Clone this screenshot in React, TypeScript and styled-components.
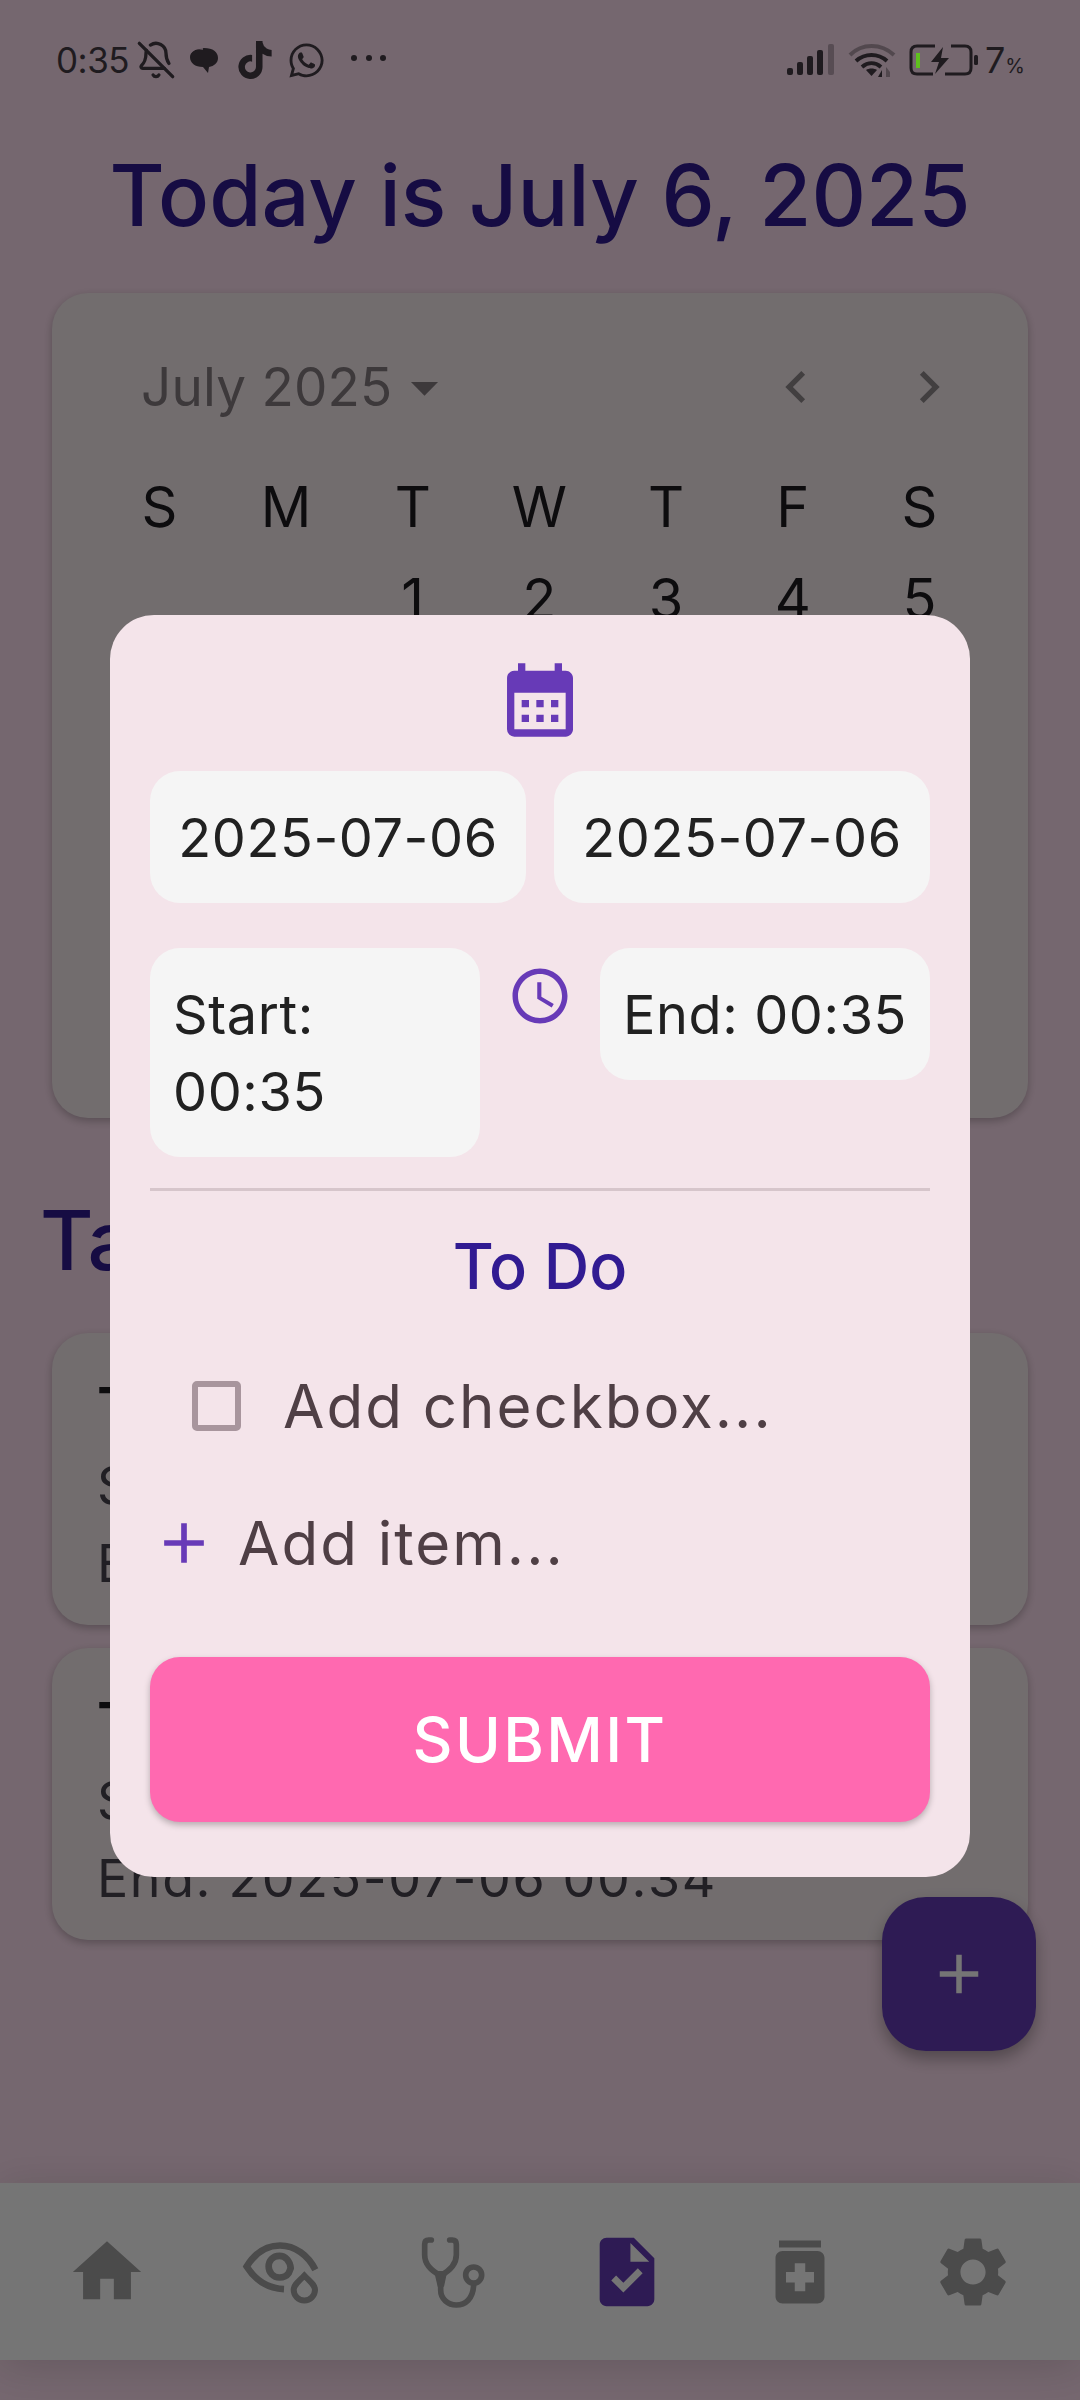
import React from 'react';
import styled, { createGlobalStyle } from 'styled-components';
import { BellOff } from 'lucide-react';
import { FaTiktok, FaWhatsapp } from 'react-icons/fa';
import {
  MdAccessTime,
  MdAdd,
  MdArrowDropDown,
  MdCalendarMonth,
  MdChevronLeft,
  MdChevronRight,
  MdHome,
  MdMedication,
  MdSettings,
  MdTask,
} from 'react-icons/md';

const WEEK_DAYS = ['S', 'M', 'T', 'W', 'T', 'F', 'S'];
const DAYS = ['', '', ...Array.from({ length: 31 }, (_, i) => String(i + 1))];

const TASKS = [
  { title: 'Task', start: 'Start: 2025-07-06 00:34', end: 'End: 2025-07-06 00:34' },
  { title: 'Task', start: 'Start: 2025-07-06 00:34', end: 'End: 2025-07-06 00:34' },
];

const EyeDropIcon = () => (
  <svg width="80" height="67" viewBox="30 60 240 200" fill="none" stroke="currentColor" strokeWidth="20">
    <path d="M162 213 C110 210 75 185 50 145 C75 105 110 82 150 82 C195 82 235 112 256 155" />
    <path d="M148 113 C128 113 116 128 116 145 C116 163 130 178 148 178 C160 178 170 174 176 165 L182 150 C180 128 166 113 148 113Z" />
    <path strokeWidth="18" d="M223 172 C240 190 255 200 255 215 A32 32 0 0 1 191 215 C191 200 206 190 223 172Z" />
  </svg>
);

const StethoscopeIcon = () => (
  <svg width="70" height="74" viewBox="570 40 210 222" fill="none" stroke="currentColor" strokeWidth="17" strokeLinecap="round">
    <path d="M610 55 H602 C594 55 590 60 590 68 V100 C590 130 615 150 638 162 C660 150 685 130 685 100 V68 C685 60 681 55 673 55 H665" />
    <path d="M638 160 V205 C638 232 660 250 685 250 C712 250 735 232 737 190" />
    <path fill="currentColor" stroke="none" d="M618 148 L658 148 L648 195 L629 195Z" />
    <circle cx="737" cy="160" r="24" strokeWidth="17" />
  </svg>
);

const BubbleIcon = () => (
  <svg width="30" height="30" viewBox="0 0 30 30">
    <path fill="currentColor" d="M15 3 C24 3 29 7 29 13 C29 18 25 21 20 22 L19 28 L14 22 C6 22 1 18 1 12 C1 7 7 3 15 3Z" />
    <path fill="none" stroke="#766770" strokeWidth="1.4" d="M1 8 C4 4 9 3 14 4" />
  </svg>
);

const SignalIcon = () => (
  <svg width="48" height="32" viewBox="0 0 48 32" fill="currentColor">
    <rect x="0" y="24" width="6" height="7" rx="2" />
    <rect x="10" y="18" width="6" height="13" rx="2" />
    <rect x="20" y="12" width="6" height="19" rx="2" />
    <rect x="30" y="6" width="6" height="25" rx="2" />
    <rect x="41" y="0" width="6" height="31" rx="2" opacity="0.35" />
  </svg>
);

const WifiIcon = () => (
  <svg width="48" height="36" viewBox="0 0 48 36" fill="none" stroke="currentColor" strokeWidth="4">
    <path opacity="0.4" d="M2 13 C14 1 33 1 46 13" />
    <path d="M8 19 C17 11 30 11 39 19" />
    <path d="M14 25 C20 20 27 20 33 25" />
    <path fill="currentColor" stroke="none" d="M23.5 34 L18 28 C21 26 26 26 29 28Z" />
    <path fill="currentColor" stroke="none" d="M34 28 V35 H30Z" />
    <path fill="currentColor" stroke="none" opacity="0.4" d="M38 25 V35 H42 V30Z" />
  </svg>
);

const BatteryIcon = () => (
  <svg width="70" height="32" viewBox="0 0 70 32" fill="none">
    <path stroke="currentColor" strokeWidth="3" d="M24 30 H8 C4 30 2 28 2 24 V8 C2 4 4 2 8 2 H26 M42 2 H56 C60 2 62 4 62 8 V24 C62 28 60 30 56 30 H36" />
    <rect x="7" y="9" width="4" height="15" fill="#5fc01e" />
    <path fill="currentColor" d="M34 3 L22 18 H30 L26 30 L40 14 H32Z" />
    <rect x="65" y="11" width="4" height="10" rx="1.5" fill="currentColor" />
  </svg>
);

const App: React.FC = () => {
  return (
    <Screen>
      <GlobalStyle />
      <StatusBar>
        <StatusGroup>
          <Clock>0:35</Clock>
          <BellOff size={40} strokeWidth={2} />
          <BubbleIcon />
          <TikTokSlot>
            <FaTiktok size={38} />
          </TikTokSlot>
          <FaWhatsapp size={39} />
          <MoreDots>
            <i />
            <i />
            <i />
          </MoreDots>
        </StatusGroup>
        <StatusGroup>
          <SignalIcon />
          <WifiIcon />
          <BatteryIcon />
          <BatteryLevel>
            7<small>%</small>
          </BatteryLevel>
        </StatusGroup>
      </StatusBar>

      <Title>Today is July 6, 2025</Title>

      <CalendarCard>
        <MonthBar>
          <MonthName>
            July 2025
            <MdArrowDropDown size={65} />
          </MonthName>
          <MonthArrows>
            <MdChevronLeft size={64} />
            <MdChevronRight size={64} />
          </MonthArrows>
        </MonthBar>
        <DayGrid>
          {WEEK_DAYS.map((day, i) => (
            <DayCell key={i}>{day}</DayCell>
          ))}
          {DAYS.map((day, i) => (
            <DayCell key={`d${i}`}>{day}</DayCell>
          ))}
        </DayGrid>
      </CalendarCard>

      <SectionTitle>Tasks</SectionTitle>

      <TaskList>
        {TASKS.map((task, i) => (
          <TaskCard key={i}>
            <TaskTitle>{task.title}</TaskTitle>
            <TaskLine>{task.start}</TaskLine>
            <TaskLine>{task.end}</TaskLine>
          </TaskCard>
        ))}
      </TaskList>

      <Fab>
        <MdAdd size={66} />
      </Fab>

      <BottomNav>
        <NavItem>
          <MdHome size={82} />
        </NavItem>
        <NavItem>
          <EyeDropIcon />
        </NavItem>
        <NavItem>
          <StethoscopeIcon />
        </NavItem>
        <NavItem $active>
          <MdTask size={82} />
        </NavItem>
        <NavItem>
          <MdMedication size={84} />
        </NavItem>
        <NavItem>
          <MdSettings size={84} />
        </NavItem>
      </BottomNav>

      <Scrim />

      <Dialog>
        <DialogIcon>
          <MdCalendarMonth size={88} />
        </DialogIcon>
        <DateRow>
          <Field $center>2025-07-06</Field>
          <Field $center>2025-07-06</Field>
        </DateRow>
        <TimeRow>
          <Field>Start: 00:35</Field>
          <ClockMark>
            <MdAccessTime size={66} />
          </ClockMark>
          <Field $noWrap>End: 00:35</Field>
        </TimeRow>
        <Divider />
        <DialogTitle>To Do</DialogTitle>
        <CheckRow>
          <CheckBox />
          <Hint>Add checkbox...</Hint>
        </CheckRow>
        <AddRow>
          <MdAdd size={68} />
          <Hint>Add item...</Hint>
        </AddRow>
        <SubmitButton>SUBMIT</SubmitButton>
      </Dialog>
    </Screen>
  );
};

export default App;

const GlobalStyle = createGlobalStyle`
  html, body {
    margin: 0;
    padding: 0;
  }

  body {
    font-family: Inter, 'Noto Sans', sans-serif;
  }

  * {
    box-sizing: border-box;
  }
`;

const Screen = styled.div`
  position: relative;
  width: 1080px;
  height: 2400px;
  overflow: hidden;
  display: flex;
  flex-direction: column;
  background: #ffe1f2;
`;

const StatusBar = styled.div`
  position: relative;
  z-index: 3;
  height: 116px;
  padding: 4px 55px 0 56px;
  display: flex;
  justify-content: space-between;
  align-items: center;
  color: #1f1b1f;
`;

const StatusGroup = styled.div`
  display: flex;
  align-items: center;
  gap: 13px;
`;

const Clock = styled.span`
  font-size: 35px;
  font-weight: 400;
  letter-spacing: -0.5px;
  margin-right: -6px;
`;

const TikTokSlot = styled.span`
  display: flex;
  margin-left: 4px;
`;

const MoreDots = styled.span`
  display: flex;
  gap: 8.5px;
  margin-left: 12px;
  margin-top: -4px;

  i {
    width: 6px;
    height: 6px;
    border-radius: 50%;
    background: #1f1b1f;
  }
`;

const BatteryLevel = styled.span`
  font-size: 36px;
  font-weight: 400;
  margin-left: -7px;

  small {
    font-size: 20px;
  }
`;

const Title = styled.h1`
  margin: 0;
  height: 177px;
  padding-top: 36px;
  text-align: center;
  font-size: 84.6px;
  line-height: 86px;
  font-weight: 500;
  color: #311b92;
`;

const CalendarCard = styled.section`
  margin: 0 52px;
  height: 825px;
  padding: 60px 62px 0;
  border-radius: 36px;
  background: #f8edf0;
  box-shadow: 0 3px 8px rgba(0, 0, 0, 0.25);
`;

const MonthBar = styled.div`
  display: flex;
  justify-content: space-between;
  align-items: center;
  height: 68px;
  padding: 0 0 0 27px;
  color: #857d81;
`;

const MonthName = styled.div`
  display: flex;
  align-items: center;
  font-size: 53px;
  letter-spacing: 0.2px;
`;

const MonthArrows = styled.div`
  display: flex;
  gap: 69px;
  margin-right: 5px;
  color: #908a8d;
`;

const DayGrid = styled.div`
  display: grid;
  grid-template-columns: repeat(7, 126.7px);
  grid-auto-rows: 92px;
  margin-top: 40px;
  margin-left: -18px;
`;

const DayCell = styled.div`
  display: flex;
  align-items: center;
  justify-content: center;
  font-size: 56px;
  color: #1d1b20;
`;

const SectionTitle = styled.h2`
  margin: 75px 0 0 40px;
  height: 140px;
  font-size: 82px;
  line-height: 96px;
  font-weight: 500;
  color: #311b92;
`;

const TaskList = styled.div`
  display: flex;
  flex-direction: column;
  gap: 23px;
  margin: 0 52px;
`;

const TaskCard = styled.article`
  height: 292px;
  padding: 36px 45px;
  border-radius: 36px;
  background: #f8edf0;
  box-shadow: 0 3px 8px rgba(0, 0, 0, 0.25);
`;

const TaskTitle = styled.div`
  font-size: 56px;
  line-height: 78px;
  font-weight: 600;
  color: #1d1b20;
`;

const TaskLine = styled.div`
  font-size: 52px;
  line-height: 78px;
  letter-spacing: 1.6px;
  color: #49454f;
`;

const Fab = styled.div`
  position: absolute;
  left: 882px;
  top: 1897px;
  width: 154px;
  height: 154px;
  display: flex;
  align-items: center;
  justify-content: center;
  border-radius: 44px;
  background: #643bb8;
  color: #fff;
  box-shadow: 0 8px 16px rgba(0, 0, 0, 0.3);
`;

const BottomNav = styled.nav`
  position: absolute;
  left: 0;
  right: 0;
  top: 2183px;
  height: 177px;
  padding: 0 20px;
  display: grid;
  grid-template-columns: repeat(6, 1fr);
  align-items: center;
  background: #fff;
  box-shadow: 0 6px 40px rgba(0, 0, 0, 0.14);
`;

const NavItem = styled.div<{ $active?: boolean }>`
  display: flex;
  justify-content: center;
  align-items: center;
  color: ${(p) => (p.$active ? '#643bb8' : '#a3a3a3')};
`;

const Scrim = styled.div`
  position: absolute;
  inset: 0;
  z-index: 2;
  background: rgba(0, 0, 0, 0.54);
`;

const Dialog = styled.div`
  position: absolute;
  z-index: 4;
  left: 110px;
  top: 615px;
  width: 860px;
  height: 1262px;
  padding: 41px 40px 0;
  border-radius: 44px;
  background: #f4e4ea;
`;

const DialogIcon = styled.div`
  display: flex;
  justify-content: center;
  height: 88px;
  margin-bottom: 27px;
  color: #673ab7;
`;

const DateRow = styled.div`
  display: grid;
  grid-template-columns: 376px 376px;
  justify-content: space-between;
`;

const Field = styled.div<{ $center?: boolean; $noWrap?: boolean }>`
  padding: 27.5px ${(p) => (p.$center ? '0' : '23px')};
  border-radius: 30px;
  background: #f5f5f5;
  text-align: ${(p) => (p.$center ? 'center' : 'left')};
  white-space: ${(p) => (p.$noWrap ? 'nowrap' : 'normal')};
  font-size: 54px;
  line-height: 77px;
  letter-spacing: 0.6px;
  color: #212121;
`;

const TimeRow = styled.div`
  display: grid;
  grid-template-columns: 330px 1fr 330px;
  align-items: start;
  margin-top: 45px;
`;

const ClockMark = styled.div`
  display: flex;
  justify-content: center;
  padding-top: 15px;
  color: #673ab7;
`;

const Divider = styled.hr`
  margin: 31px 0 0;
  border: 0;
  height: 3px;
  background: #d6c5cb;
`;

const DialogTitle = styled.h3`
  margin: 38px 0 0;
  text-align: center;
  font-size: 63px;
  line-height: 74px;
  font-weight: 500;
  color: #311b92;
`;

const CheckRow = styled.div`
  display: flex;
  align-items: center;
  margin-top: 66px;
  padding-left: 42px;
  gap: 42px;
`;

const CheckBox = styled.span`
  width: 49px;
  height: 50px;
  border: 6px solid #a8959d;
  border-radius: 5px;
`;

const Hint = styled.span`
  font-size: 60px;
  line-height: 74px;
  letter-spacing: 2px;
  color: #4f3f45;
`;

const AddRow = styled.div`
  display: flex;
  align-items: center;
  margin-top: 63px;
  gap: 20px;
  color: #673ab7;
`;

const SubmitButton = styled.button`
  display: block;
  width: 100%;
  height: 165px;
  margin-top: 77px;
  border: 0;
  border-radius: 30px;
  background: #ff69b0;
  color: #fff;
  font-family: inherit;
  font-size: 62px;
  font-weight: 500;
  letter-spacing: 2.4px;
  box-shadow: 0 3px 6px rgba(0, 0, 0, 0.25);
`;
